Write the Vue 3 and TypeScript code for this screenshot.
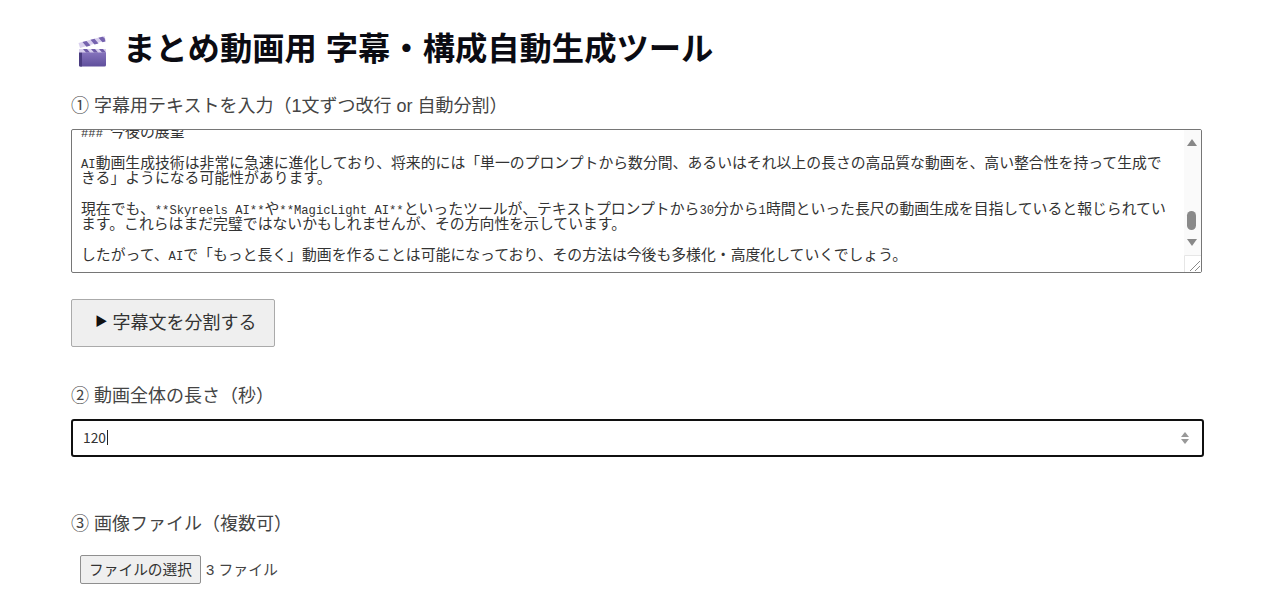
<script setup lang="ts">
const lines: string[] = [
  "### 今後の展望",
  "",
  "AI動画生成技術は非常に急速に進化しており、将来的には「単一のプロンプトから数分間、あるいはそれ以上の長さの高品質な動画を、高い整合性を持って生成で",
  "きる」ようになる可能性があります。",
  "",
  "現在でも、**Skyreels AI**や**MagicLight AI**といったツールが、テキストプロンプトから30分から1時間といった長尺の動画生成を目指していると報じられてい",
  "ます。これらはまだ完璧ではないかもしれませんが、その方向性を示しています。",
  "",
  "したがって、AIで「もっと長く」動画を作ることは可能になっており、その方法は今後も多様化・高度化していくでしょう。",
];

// half width runs get their own font so they keep the 1:2 width of the CJK text
const rows = lines.map((line) =>
  line.split(/([\x20-\x7e]+)/).filter((part) => part !== "").map((part) => ({
    text: part,
    latin: /^[\x20-\x7e]+$/.test(part),
  }))
);
</script>

<template>
  <main class="page">
    <h1 class="title">
      <svg class="title__icon" viewBox="0 0 30 32" width="30" height="32" aria-hidden="true">
        <defs>
          <linearGradient id="clapBody" x1="0" y1="0" x2="0" y2="1">
            <stop offset="0" stop-color="#8f7cc4" />
            <stop offset="1" stop-color="#5f4f9c" />
          </linearGradient>
        </defs>
        <path d="M1 14h27v16a1.500 1.500 0 0 1-1.500 1.500h-24A1.500 1.500 0 0 1 1 30z" fill="url(#clapBody)" />
        <path d="M1 14h3v17.500H2.500A1.500 1.500 0 0 1 1 30z" fill="#4a3c80" />
        <path d="M1 14h27v3.500H1z" fill="#d9d0ee" />
        <path d="M5 14l3 3.500h4L9 14zM13 14l3 3.500h4L17 14zM21 14l3 3.500h4L25 14z" fill="#6f5ca8" />
        <path d="M0.500 8L26.500 1l1.300 4.500L2 13z" fill="#d9d0ee" />
        <path d="M4.500 7l4 4.700 4-1.100-4-4.700zM12.500 4.800l4 4.700 4-1.100-4-4.700zM20.500 2.700l4 4.600 3-0.800-1-3.600-2-1.100z" fill="#7562ae" />
      </svg>
      <span>まとめ動画用 字幕・構成自動生成ツール</span>
    </h1>

    <p class="label label--first">① 字幕用テキストを入力（1文ずつ改行 or 自動分割）</p>
    <div class="textarea">
      <div class="textarea__text">
        <div v-for="(row, i) in rows" :key="i" class="textarea__line">
          <span v-for="(part, j) in row" :key="j" :class="{ latin: part.latin }">{{ part.text }}</span>
        </div>
      </div>
      <div class="scrollbar">
        <span class="scrollbar__up"></span>
        <span class="scrollbar__thumb"></span>
        <span class="scrollbar__down"></span>
        <svg class="scrollbar__grip" viewBox="0 0 17 17" width="17" height="17" aria-hidden="true">
          <path d="M0 0h17v17H0z" fill="#fff" />
          <path d="M0.500 17V0.500H17" fill="none" stroke="#e6e6e6" />
          <path d="M6 16L16 6M11 16l5-5" stroke="#8a8a8a" fill="none" />
        </svg>
      </div>
    </div>

    <button class="split-btn" type="button"><span class="split-btn__arrow">▶</span>字幕文を分割する</button>

    <p class="label label--second">② 動画全体の長さ（秒）</p>
    <div class="number-input">
      <span class="number-input__value">120</span>
      <span class="number-input__caret"></span>
      <span class="spinner">
        <span class="spinner__up"></span>
        <span class="spinner__down"></span>
      </span>
    </div>

    <p class="label label--third">③ 画像ファイル（複数可）</p>
    <div class="file-row">
      <button class="file-btn" type="button">ファイルの選択</button>
      <span class="file-count">3 ファイル</span>
    </div>
  </main>
</template>

<style>
html,
body {
  margin: 0;
  background: #fff;
  overflow: hidden;
}
</style>

<style scoped>
.page {
  box-sizing: border-box;
  height: 592px;
  overflow: hidden;
  padding: 27px 76px 0 71px;
  font-family: "Liberation Sans", "Noto Sans CJK JP", sans-serif;
  color: #31333f;
}

.title {
  display: flex;
  align-items: center;
  gap: 15px;
  margin: 0 0 0 7px;
  height: 44px;
  font-size: 32.3px;
  line-height: 44px;
  font-weight: 700;
  color: #0b0b12;
}

.title__icon {
  flex: none;
  margin-top: 3px;
}

.label {
  margin: 0;
  font-size: 18px;
  line-height: 24px;
  color: #444;
}

.label--first {
  margin-top: 23px;
}

.label--second {
  margin-top: 37px;
}

.label--third {
  margin-top: 55px;
}

.textarea {
  box-sizing: border-box;
  display: flex;
  width: 1131px;
  height: 144px;
  margin-top: 11px;
  border: 1px solid #767676;
  border-radius: 2px;
  overflow: hidden;
}

.textarea__text {
  flex: 1;
  min-width: 0;
  margin-top: -7px;
  padding-left: 9px;
  font-family: "Noto Sans CJK JP", monospace;
  font-size: 14.85px;
  line-height: 15.33px;
  color: #333;
  white-space: pre;
}

.textarea__line {
  height: 15.33px;
}

.latin {
  font-family: "Liberation Mono", monospace;
  font-size: 12.2px;
}

.scrollbar {
  position: relative;
  flex: none;
  width: 17px;
  background: #fafafa;
}

.scrollbar__up,
.scrollbar__down {
  position: absolute;
  left: 3px;
  width: 0;
  height: 0;
  border-left: 5px solid transparent;
  border-right: 5px solid transparent;
}

.scrollbar__up {
  top: 9px;
  border-bottom: 7px solid #888;
}

.scrollbar__down {
  top: 109px;
  border-top: 7px solid #888;
}

.scrollbar__thumb {
  position: absolute;
  top: 81px;
  left: 3px;
  width: 9px;
  height: 19px;
  border-radius: 5px;
  background: #8a8a8a;
}

.scrollbar__grip {
  position: absolute;
  right: 0;
  bottom: 0;
}

.split-btn {
  display: flex;
  align-items: center;
  box-sizing: border-box;
  width: 204px;
  height: 48px;
  margin-top: 26px;
  padding: 0 0 5px 23px;
  border: 1px solid #aaa;
  border-radius: 2px;
  background: #efefef;
  font-family: "Liberation Sans", "Noto Sans CJK JP", sans-serif;
  font-size: 18px;
  color: #333;
}

.split-btn__arrow {
  margin-right: 5px;
  font-size: 12.500px;
  color: #111;
}

.number-input {
  box-sizing: border-box;
  display: flex;
  align-items: center;
  width: 1133px;
  height: 38px;
  margin-top: 11px;
  padding: 0 11px 2px 10px;
  border: 2px solid #101010;
  border-radius: 3px;
  font-family: "Noto Sans CJK JP", sans-serif;
  font-size: 13.8px;
  color: #333;
}

.number-input__caret {
  width: 1px;
  height: 15px;
  margin-left: 1px;
  background: #222;
}

.spinner {
  display: flex;
  flex-direction: column;
  gap: 2px;
  margin-top: 2px;
  margin-left: auto;
  margin-right: 2px;
}

.spinner__up,
.spinner__down {
  width: 0;
  height: 0;
  border-left: 4px solid transparent;
  border-right: 4px solid transparent;
}

.spinner__up {
  border-bottom: 5px solid #999;
}

.spinner__down {
  border-top: 5px solid #999;
}

.file-row {
  display: flex;
  align-items: center;
  gap: 5px;
  margin-top: 19px;
  margin-left: 9px;
}

.file-btn {
  box-sizing: border-box;
  width: 121px;
  height: 29px;
  padding: 0 0 3px;
  border: 1px solid #8f8f8f;
  border-radius: 2px;
  background: #efefef;
  font-family: "Noto Sans CJK JP", sans-serif;
  font-size: 14.700px;
  color: #333;
}

.file-count {
  margin-top: -2px;
  font-size: 14.900px;
  color: #444;
}
</style>
